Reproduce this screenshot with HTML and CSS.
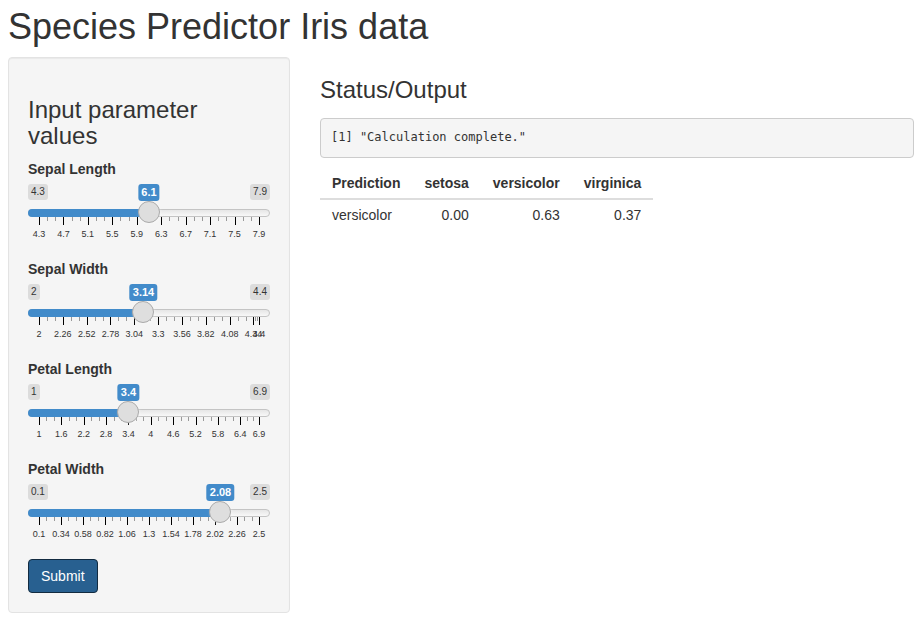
FILE: index.html
```html
<!DOCTYPE html>
<html lang="en">
<head>
<meta charset="utf-8">
<title>Species Predictor Iris data</title>
<link rel="stylesheet" href="styles.css">
</head>
<body>
<h1>Species Predictor Iris data</h1>
<div class="layout">
  <form class="well">
    <h3>Input parameter values</h3>
    <div class="field" data-grid-step="0.4">
      <label for="sepal-length">Sepal Length</label>
      <div class="slider">
        <div class="limits"><span>4.3</span><span>7.9</span></div>
        <div class="rail"><output class="value" for="sepal-length">6.1</output></div>
        <input type="range" id="sepal-length" min="4.3" max="7.9" step="0.1" value="6.1">
        <div class="ticks"></div>
      </div>
    </div>
    <div class="field" data-grid-step="0.26">
      <label for="sepal-width">Sepal Width</label>
      <div class="slider">
        <div class="limits"><span>2</span><span>4.4</span></div>
        <div class="rail"><output class="value" for="sepal-width">3.14</output></div>
        <input type="range" id="sepal-width" min="2" max="4.4" step="0.01" value="3.14">
        <div class="ticks"></div>
      </div>
    </div>
    <div class="field" data-grid-step="0.6">
      <label for="petal-length">Petal Length</label>
      <div class="slider">
        <div class="limits"><span>1</span><span>6.9</span></div>
        <div class="rail"><output class="value" for="petal-length">3.4</output></div>
        <input type="range" id="petal-length" min="1" max="6.9" step="0.1" value="3.4">
        <div class="ticks"></div>
      </div>
    </div>
    <div class="field" data-grid-step="0.24">
      <label for="petal-width">Petal Width</label>
      <div class="slider">
        <div class="limits"><span>0.1</span><span>2.5</span></div>
        <div class="rail"><output class="value" for="petal-width">2.08</output></div>
        <input type="range" id="petal-width" min="0.1" max="2.5" step="0.01" value="2.08">
        <div class="ticks"></div>
      </div>
    </div>
    <button class="btn" type="button">Submit</button>
  </form>
  <main>
    <h3>Status/Output</h3>
    <pre>[1] "Calculation complete."</pre>
    <table>
      <thead>
        <tr><th>Prediction</th><th>setosa</th><th>versicolor</th><th>virginica</th></tr>
      </thead>
      <tbody>
        <tr><td>versicolor</td><td>0.00</td><td>0.63</td><td>0.37</td></tr>
      </tbody>
    </table>
  </main>
</div>
<script src="script.js"></script>
</body>
</html>
```
FILE: styles.css
```css
*,
*::before {
  box-sizing: border-box;
}

body {
  margin: 0;
  padding: 7px 10px 12px 8px;
  background: #fff;
  color: #333;
  font: 14px/20px "Liberation Sans", Arial, sans-serif;
}

h1 {
  margin: 0 0 10px;
  font-size: 36px;
  font-weight: 400;
  line-height: 40px;
}

h3 {
  margin: 20px 0 10px;
  font-size: 24px;
  font-weight: 400;
  line-height: 26px;
}

.layout {
  display: grid;
  grid-template-columns: calc((100% + 30px) / 3 - 30px) minmax(0, 1fr);
  gap: 30px;
  align-items: start;
}

.well {
  padding: 19px;
  background: #f5f5f5;
  border: 1px solid #e3e3e3;
  border-radius: 4px;
  box-shadow: inset 0 1px 1px rgba(0, 0, 0, 0.05);
}

.field {
  margin-bottom: 15px;
}

.field label {
  display: block;
  margin-bottom: 5px;
  font-weight: 700;
}

.slider {
  position: relative;
  height: 60px;
}

.slider::before {
  content: "";
  position: absolute;
  top: 25px;
  left: 0;
  right: 0;
  height: 8px;
  border: 1px solid #c4c4c4;
  border-radius: 8px;
  background: linear-gradient(#e6e6e6, #f8f8f8);
}

.limits {
  display: flex;
  justify-content: space-between;
  height: 17px;
}

.limits span {
  height: 16px;
  padding: 0 3px;
  border-radius: 3px;
  background: #dcdcdc;
  font-size: 10px;
  line-height: 16px;
}

.rail {
  position: absolute;
  top: 0;
  left: 11px;
  right: 11px;
}

.value {
  position: absolute;
  left: var(--at);
  transform: translateX(-50%);
  padding: 0 3px;
  border-radius: 3px;
  background: #428bca;
  color: #fff;
  font-size: 11px;
  font-weight: 700;
  line-height: 17px;
}

.slider input {
  position: relative;
  z-index: 1;
  display: block;
  width: 100%;
  height: 24px;
  margin: 0;
  background: none;
  appearance: none;
}

.slider input::-webkit-slider-runnable-track {
  height: 8px;
  border-radius: 8px;
  background: linear-gradient(#428bca, #428bca) 0 0 / var(--at) 100% no-repeat;
}

.slider input::-webkit-slider-thumb {
  width: 22px;
  height: 22px;
  margin-top: -8px;
  border: 1px solid #aaa;
  border-radius: 50%;
  background: #dedede;
  box-shadow: 1px 1px 3px rgba(255, 255, 255, 0.3);
  appearance: none;
}

.ticks {
  position: absolute;
  top: 33px;
  left: 11px;
  right: 11px;
  height: 20px;
}

.ticks i {
  position: absolute;
  width: 1px;
  height: 4px;
  background: #999;
}

.ticks i.major {
  height: 8px;
  background: #000;
}

.ticks span {
  position: absolute;
  top: 13px;
  transform: translateX(-50%);
  font-size: 9px;
  line-height: 9px;
}

.btn {
  display: block;
  padding: 6px 12px;
  border: 1px solid #122b40;
  border-radius: 4px;
  background: #286090;
  color: #fff;
  font: inherit;
}

pre {
  margin: 15px 0 10px;
  padding: 8px 10px 10px;
  border: 1px solid #ccc;
  border-radius: 4px;
  background: #f5f5f5;
  font: 12px/20px "DejaVu Sans Mono", monospace;
}

table {
  border-collapse: separate;
  border-spacing: 0;
}

th,
td {
  padding: 5px 12px;
  text-align: right;
}

th {
  border-bottom: 2px solid #ddd;
}

th:first-child,
td:first-child {
  text-align: left;
}
```
FILE: script.js
```js
// Draws each slider's scale: labelled major ticks with two minor ticks between.
document.querySelectorAll(".field").forEach((field) => {
  const input = field.querySelector("input");
  const slider = field.querySelector(".slider");
  const output = field.querySelector("output");
  const ticks = field.querySelector(".ticks");
  const min = Number(input.min);
  const max = Number(input.max);
  const step = Number(field.dataset.gridStep);
  const percent = (value) => ((value - min) / (max - min)) * 100;

  const addTick = (value, major) => {
    const tick = document.createElement("i");
    tick.style.left = percent(value) + "%";
    if (major) {
      tick.className = "major";
      const text = document.createElement("span");
      text.textContent = Number(value.toFixed(2));
      text.style.left = percent(value) + "%";
      ticks.append(text);
    }
    ticks.append(tick);
  };

  const majors = [];
  for (let n = 0; min + n * step < max - 0.001; n++) majors.push(min + n * step);
  majors.push(max);
  majors.forEach((value, n) => {
    addTick(value, true);
    if (n < majors.length - 1) {
      const gap = (majors[n + 1] - value) / 3;
      addTick(value + gap, false);
      addTick(value + 2 * gap, false);
    }
  });

  const update = () => {
    slider.style.setProperty("--at", percent(Number(input.value)) + "%");
    output.textContent = Number(input.value);
  };
  input.addEventListener("input", update);
  update();
});
```
